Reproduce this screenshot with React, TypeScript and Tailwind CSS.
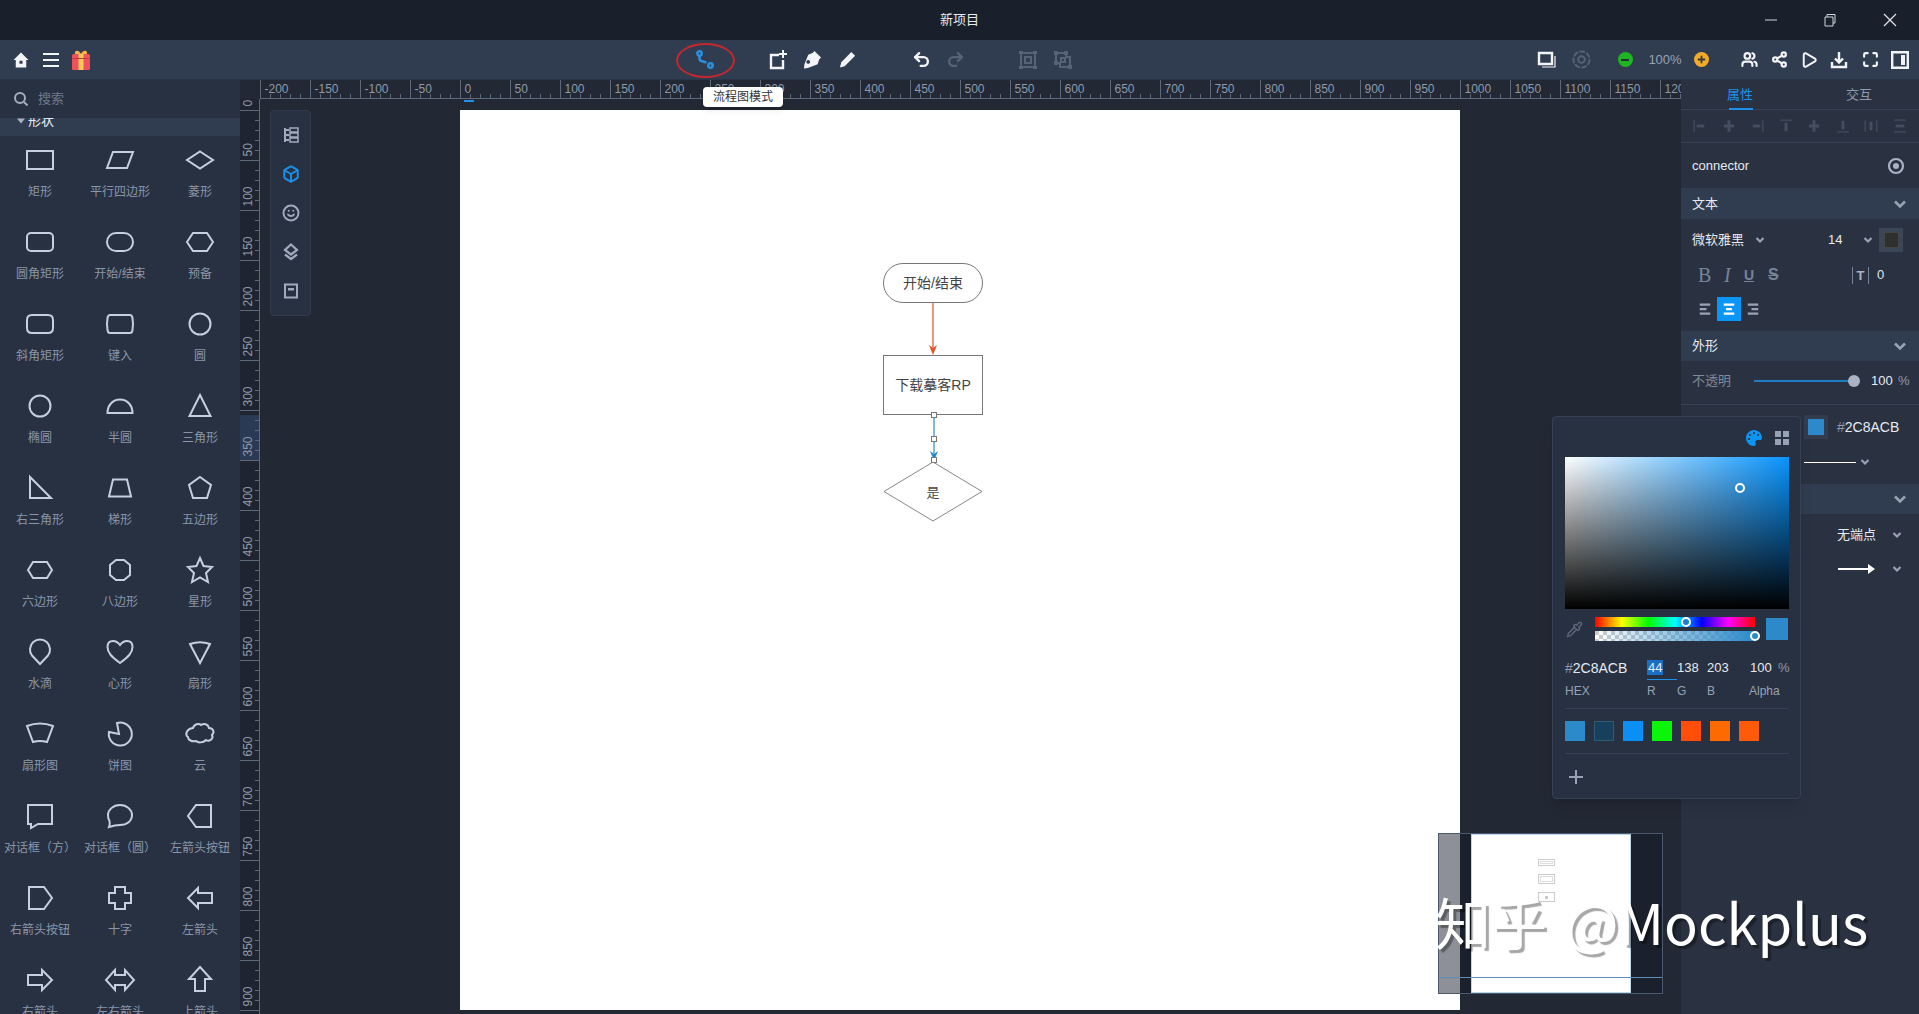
import type { ReactNode } from "react";
import { Box, Maximize, Pipette, Play, Redo2, Share2, Smile, Undo2, Users } from "lucide-react";
import { FaPalette } from "react-icons/fa";

const shapes: { label: string; d: string }[] = [
  { label: "矩形", d: "M3 7h26v18H3z" },
  { label: "平行四边形", d: "M9 8h20l-6 16H3z" },
  { label: "菱形", d: "M16 7.500 29 16 16 24.500 3 16z" },
  { label: "圆角矩形", d: "M7 7h18a4 4 0 0 1 4 4v10a4 4 0 0 1-4 4H7a4 4 0 0 1-4-4V11a4 4 0 0 1 4-4z" },
  { label: "开始/结束", d: "M12 7h8a9 9 0 0 1 0 18h-8a9 9 0 0 1 0-18z" },
  { label: "预备", d: "M9 7h14l6 9-6 9H9l-6-9z" },
  { label: "斜角矩形", d: "M8 7h16q5 0 5 5v8q0 5-5 5H8q-5 0-5-5v-8q0-5 5-5z" },
  { label: "键入", d: "M6 7h20q2 0 2.500 3 1 6 0 12-.5 3-2.500 3H6q-2 0-2.500-3-1-6 0-12Q4 7 6 7z" },
  { label: "圆", d: "M16 5.500a10.500 10.500 0 1 1 0 21 10.500 10.500 0 0 1 0-21z" },
  { label: "椭圆", d: "M16 5.500a10.500 10.500 0 1 1 0 21 10.500 10.500 0 0 1 0-21z" },
  { label: "半圆", d: "M3.500 23H28.500C28.500 15 23 9.500 16 9.500S3.500 15 3.500 23z" },
  { label: "三角形", d: "M16 5 26.500 26h-21z" },
  { label: "右三角形", d: "M6 5v21h21z" },
  { label: "梯形", d: "M9 7.500h14l4 17H5z" },
  { label: "五边形", d: "M16 5l11 8-4 13H9L5 13z" },
  { label: "六边形", d: "M9 8h14l5 8-5 8H9l-5-8z" },
  { label: "八边形", d: "M12 6h8l6 5v10l-6 5h-8l-6-5V11z" },
  { label: "星形", d: "M16 4l3.500 8 8.500 1-6 6 2 9-8-4.500L8 28l2-9-6-6 8.500-1z" },
  { label: "水滴", d: "M16 28 8 19.500a10 10 0 1 1 16 0z" },
  { label: "心形", d: "M16 27C8 21 3.500 17 3.500 11 3.500 7 6 5 9 5c3 0 5.500 2 7 4 1.500-2 4-4 7-4 3 0 5.500 2 5.500 6 0 6-4.500 10-12.500 16z" },
  { label: "扇形", d: "M6 8q10-3.500 20 0L16 27z" },
  { label: "扇形图", d: "M3 8q13-5 26 0l-6 16q-7-2-14 0z" },
  { label: "饼图", d: "M13 5a11.500 11.500 0 1 1-8 9l10 2z" },
  { label: "云", d: "M9 10c1-4 6-5 8-3 3-2 7-1 8 3 4 0 6 4 3 7 2 4-3 7-6 5-3 3-8 3-10 1-4 1-8-1-8-4-3-2-2-8 5-9z" },
  { label: "对话框（方）", d: "M4 5h24v19H14l-7 4v-4H4z" },
  { label: "对话框（圆）", d: "M16 5c7 0 12 5 12 10 0 6-5 10-12 10-3 0-5 0-11 2 1-3 1-4 .5-6C4 19 4 17 4 15 4 10 9 5 16 5z" },
  { label: "左箭头按钮", d: "M12 5h15v22H12L4 16z" },
  { label: "右箭头按钮", d: "M5 5h15l8 11-8 11H5z" },
  { label: "十字", d: "M11 5h10v6h6v10h-6v6H11v-6H5V11h6z" },
  { label: "左箭头", d: "M14 6 4 16l10 10v-5h14V11H14z" },
  { label: "右箭头", d: "M18 6l10 10-10 10v-5H4V11h14z" },
  { label: "左右箭头", d: "M11 6 2 16l9 10v-5h10v5l9-10-9-10v5H11z" },
  { label: "上箭头", d: "M16 3l11 12h-6v12H11V15H5z" },
];

// thin guide line, then the thick block of each align button
const alignPaths = [
  ["M5 5v14", "M8 12h9"],
  ["", "M12 5v14 M6 12h12"],
  ["M19 5v14", "M7 12h9"],
  ["M5 5h14", "M12 8v10"],
  ["", "M12 5v14 M6 12h12"],
  ["M5 19h14", "M12 6v10"],
  ["M5 5v14 M19 5v14", "M12 7v10"],
  ["M5 5h14 M5 19h14", "M7 12h10"],
];

const swatches = [
  "bg-[#2c8acb]",
  "bg-[#17405c] border border-[#2f5a78]",
  "bg-[#0a90f5]",
  "bg-[#0af50a]",
  "bg-[#ff4d0a]",
  "bg-[#ff6a00]",
  "bg-[#ff5a0a]",
];

function Slot({ className = "", children }: { className?: string; children: ReactNode }) {
  return <div className={`w-[30px] h-[30px] shrink-0 flex items-center justify-center ${className}`}>{children}</div>;
}

function Chevron({ big = false }: { big?: boolean }) {
  return big ? (
    <svg width="16" height="16" viewBox="0 0 16 16" fill="none" stroke="#97a3b5" strokeWidth="2.600">
      <path d="M3 5.500 8 10.500l5-5" />
    </svg>
  ) : (
    <svg width="10" height="10" viewBox="0 0 10 10" fill="none" stroke="#97a3b5" strokeWidth="2.200">
      <path d="M1.500 3 5 6.500 8.500 3" />
    </svg>
  );
}

function SectionHeader({ title, className }: { title?: string; className: string }) {
  return (
    <div className={`${className} shrink-0 bg-[#303c50] flex items-center justify-between pl-[11px] pr-[11px] text-[13px] text-[#e6eaf0]`}>
      <span>{title}</span>
      <Chevron big />
    </div>
  );
}

function AlignLines({ mode, color }: { mode: "l" | "c" | "r"; color: string }) {
  const d = { l: "M5 6h14 M5 12h9 M5 18h14", c: "M5 6h14 M8 12h8 M5 18h14", r: "M5 6h14 M10 12h9 M5 18h14" }[mode];
  return (
    <svg width="18" height="18" viewBox="0 0 24 24" fill="none" stroke={color} strokeWidth="3">
      <path d={d} />
    </svg>
  );
}

function TopBar() {
  return (
    <div className="h-[40px] shrink-0 bg-[#1a202b] relative flex items-center justify-center">
      <span className="text-[13px] text-[#e8ebf0]">新项目</span>
      <div className="absolute right-0 top-0 h-[40px] flex items-center">
        <svg className="mr-[45px]" width="14" height="14" viewBox="0 0 14 14" stroke="#cfd5de" strokeWidth="1"><path d="M1 7h12" /></svg>
        <svg className="mr-[46px]" width="14" height="14" viewBox="0 0 14 14" fill="none" stroke="#cfd5de" strokeWidth="1"><path d="M2 4h8v9H2z M4 4V1.500h8V10h-2" /></svg>
        <svg className="mr-[22px]" width="14" height="14" viewBox="0 0 14 14" stroke="#e2e6ec" strokeWidth="1.200"><path d="M1 1l12 12M13 1 1 13" /></svg>
      </div>
    </div>
  );
}

function Toolbar() {
  return (
    <div className="h-[40px] shrink-0 bg-[#303d50] flex items-center pl-[6px] border-b border-[#2a3547]">
      <Slot>
        <svg width="18" height="18" viewBox="0 0 24 24" fill="#f2f4f7" fillRule="evenodd"><path d="M12 2 2 12h3v10h14V12h3zM10 13h4v4h-4z" /></svg>
      </Slot>
      <Slot>
        <svg width="18" height="18" viewBox="0 0 18 18" stroke="#f2f4f7" strokeWidth="2.200"><path d="M1 3h16M1 9h16M1 15h16" /></svg>
      </Slot>
      <Slot>
        <svg width="20" height="22" viewBox="0 0 20 22">
          <path d="M5 2c2-1 4 1 5 3 1-2 3-4 5-3 2 1 1 4-1 4H6C4 6 3 3 5 2z" fill="#f9b24c" />
          <rect x="1" y="5" width="18" height="16" rx="1.500" fill="#f0505a" />
          <rect x="7.500" y="5" width="5" height="16" fill="#fdc95a" />
          <rect x="1" y="9" width="18" height="1" fill="#c23a48" />
        </svg>
      </Slot>

      <Slot className="ml-[594px] relative">
        <svg width="20" height="20" viewBox="0 0 20 20" fill="none" stroke="#2a90de" strokeWidth="2.500">
          <circle cx="4.500" cy="3.500" r="2.200" />
          <circle cx="15.500" cy="15.500" r="2.200" />
          <path d="M4.500 6v2.500q0 2 2 2.500l5 1.500" />
        </svg>
        <div className="absolute left-[-14px] top-[-2px] w-[59px] h-[35px] rounded-[50%] border-2 border-[#c4282f]" />
      </Slot>

      <Slot className="ml-[43px]">
        <svg width="20" height="20" viewBox="0 0 20 20" fill="none" stroke="#f2f4f7" strokeWidth="2.400">
          <path d="M11 5H3v13h12v-8" />
          <path d="M15 0v8M11 4h8" strokeWidth="2" />
        </svg>
      </Slot>
      <Slot className="ml-[4px]">
        <svg width="19" height="19" viewBox="0 0 20 20" fill="#f2f4f7" fillRule="evenodd">
          <path d="M12 1l7 7-2 2-1.500 5L5 19l-4 .500L1.500 15l4-10 5-2zM7.500 12.500a2 2 0 1 0 0 .1z" />
        </svg>
      </Slot>
      <Slot className="ml-[5px]">
        <svg width="19" height="19" viewBox="0 0 20 20" fill="#f2f4f7">
          <path d="M14 2l4 4L7 17l-5 1.500L3.500 13z" />
        </svg>
      </Slot>

      <Slot className="ml-[44px]"><Undo2 size={19} strokeWidth={3} color="#f2f4f7" /></Slot>
      <Slot className="ml-[4px]"><Redo2 size={19} strokeWidth={3} color="#566275" /></Slot>

      <Slot className="ml-[43px]">
        <svg width="20" height="20" viewBox="0 0 20 20" fill="none" stroke="#566275" strokeWidth="2">
          <path d="M3 3h14v14H3z" />
          <path d="M7 7h6v6H7z" />
          <path d="M1 1h4v3H1zM15 1h4v3h-4zM1 16h4v3H1zM15 16h4v3h-4z" fill="#566275" stroke="none" />
        </svg>
      </Slot>
      <Slot className="ml-[5px]">
        <svg width="20" height="20" viewBox="0 0 20 20" fill="none" stroke="#566275" strokeWidth="2">
          <path d="M3 3h10v4h4v10H7v-4H3z" />
          <path d="M8 8h4v4H8z" />
          <path d="M1 1h4v4H1zM11 1h4v4h-4zM15 15h4v4h-4zM1 11h4v4H1z" fill="#566275" stroke="none" />
        </svg>
      </Slot>

      <Slot className="ml-[454px]">
        <svg width="20" height="20" viewBox="0 0 20 20" fill="none" stroke="#f2f4f7">
          <path d="M2 3h13v11H2z" strokeWidth="2.400" />
          <path d="M18 6v11H5" strokeWidth="1.200" />
        </svg>
      </Slot>
      <Slot className="ml-[4px]">
        <svg width="19" height="19" viewBox="0 0 20 20" fill="none" stroke="#566275">
          <circle cx="10" cy="10" r="8.500" strokeWidth="2" strokeDasharray="6 1.500" />
          <circle cx="10" cy="10" r="3.500" strokeWidth="2" />
        </svg>
      </Slot>

      <Slot className="ml-[14px]">
        <div className="w-[15px] h-[15px] rounded-full bg-[#1fb522] flex items-center justify-center">
          <div className="w-[8px] h-[2px] bg-[#20303a]" />
        </div>
      </Slot>
      <div className="ml-[5px] w-[40px] text-center text-[13px] text-[#98a3b4]">100%</div>
      <Slot className="ml-[1px]">
        <svg width="15" height="15" viewBox="0 0 15 15">
          <circle cx="7.500" cy="7.500" r="7.500" fill="#efab29" />
          <path d="M3.800 7.500h7.400M7.500 3.800v7.400" stroke="#3a3a30" strokeWidth="1.800" />
        </svg>
      </Slot>

      <Slot className="ml-[18px]"><Users size={17} strokeWidth={3} color="#f2f4f7" /></Slot>
      <Slot><Share2 size={17} strokeWidth={3} color="#f2f4f7" /></Slot>
      <Slot><Play size={18} strokeWidth={2.600} color="#f2f4f7" /></Slot>
      <Slot>
        <svg width="18" height="18" viewBox="0 0 18 18" fill="none" stroke="#f2f4f7" strokeWidth="2.400">
          <path d="M9 1v10M5 7.500 9 11.500l4-4" />
          <path d="M2 11v5h14v-5" />
        </svg>
      </Slot>
      <Slot className="ml-[1px]"><Maximize size={17} strokeWidth={3} color="#f2f4f7" /></Slot>
      <Slot>
        <svg width="18" height="18" viewBox="0 0 18 18" fill="none">
          <path d="M1.200 1.200h15.600v15.600H1.200z" stroke="#f2f4f7" strokeWidth="2.400" />
          <path d="M10 4h4v10h-4z" fill="#f2f4f7" />
        </svg>
      </Slot>
    </div>
  );
}

function ShapePanel() {
  return (
    <div className="w-[240px] shrink-0 bg-[#283142] flex flex-col overflow-hidden">
      <div className="h-[38px] shrink-0 flex items-center pl-[13px] text-[13px] text-[#6e7a8c] z-10 bg-[#283142]">
        <svg width="16" height="16" viewBox="0 0 16 16" fill="none" stroke="#a3aebd" strokeWidth="2">
          <circle cx="7" cy="7" r="5" />
          <path d="M11 11l3.500 3.500" />
        </svg>
        <span className="ml-[9px]">搜索</span>
      </div>
      <div className="h-[30px] -mt-[12px] shrink-0 bg-[#303c50] flex items-center pl-[17px] text-[13px] text-[#e6eaf0]">
        <svg className="mr-[3px]" width="8" height="8" viewBox="0 0 8 8" fill="#a7b2c2"><path d="M0 1.500h8L4 6.500z" /></svg>
        形状
      </div>
      <div className="grid grid-cols-[80px_80px_80px] overflow-hidden">
        {shapes.map((shape) => (
          <div key={shape.label} className="h-[82px] pt-[8px] flex flex-col items-center">
            <svg width="32" height="32" viewBox="0 0 32 32" fill="none" stroke="#c5cfdd" strokeWidth="2">
              <path d={shape.d} />
            </svg>
            <span className="mt-[8px] h-[16px] leading-[16px] whitespace-nowrap text-[12px] text-[#8a96a8]">{shape.label}</span>
          </div>
        ))}
      </div>
    </div>
  );
}

function HorizontalRuler() {
  const ticks = [];
  for (let v = -200; v <= 1230; v += 10) ticks.push(v);
  return (
    <svg className="block shrink-0" width="1441" height="19" viewBox="0 0 1441 19">
      <rect width="1441" height="19" fill="#222834" />
      <path d="M20 18.500H1441" stroke="#5d6879" />
      {ticks.map((v) => {
        const x = v + 220 + 0.5;
        const major = v % 50 === 0;
        return (
          <g key={v}>
            <path d={major ? `M${x} 0V19` : `M${x} 14V19`} stroke="#5d6879" />
            {major && (
              <text x={x + 4} y="13" fontSize="12" fill="#8e99a9">{v}</text>
            )}
          </g>
        );
      })}
    </svg>
  );
}

function VerticalRuler() {
  const ticks = [];
  for (let v = 0; v <= 900; v += 10) ticks.push(v);
  return (
    <svg className="block shrink-0" width="20" height="915" viewBox="0 0 20 915">
      <rect width="20" height="915" fill="#1f2530" />
      <rect y="316" width="20" height="45" fill="#2a3a55" />
      <path d="M19.500 0V915" stroke="#5d6879" />
      {ticks.map((v) => {
        const y = v + 11 + 0.5;
        const major = v % 50 === 0;
        return (
          <g key={v}>
            <path d={major ? `M0 ${y}H20` : `M15 ${y}H20`} stroke="#5d6879" />
            {major && (
              <text transform={`translate(12 ${y - 4}) rotate(-90)`} fontSize="12" fill="#8e99a9">{v}</text>
            )}
          </g>
        );
      })}
    </svg>
  );
}

function FlowChart() {
  return (
    <svg className="block" width="1000" height="900" viewBox="0 0 1000 900" fontSize="14" fill="#444">
      <rect x="423.500" y="153.500" width="99" height="39" rx="19.500" fill="none" stroke="#777" />
      <text x="473" y="178" textAnchor="middle">开始/结束</text>
      <path d="M473 193V240" stroke="#e8502a" strokeWidth="1.200" />
      <path d="M469 235 473 238 477 235 473 245z" fill="#e8502a" />
      <rect x="423.500" y="245.500" width="99" height="59" fill="none" stroke="#777" />
      <text x="473" y="280" textAnchor="middle">下载摹客RP</text>
      <path d="M474 305V345" stroke="#2c8acb" strokeWidth="1.200" />
      <path d="M470 341 474 344 478 341 474 351z" fill="#2c8acb" />
      <path d="M473 352 522 381.500 473 411 424 381.500z" fill="none" stroke="#888" />
      <text x="473" y="387" textAnchor="middle" fontSize="13">是</text>
      <rect x="471.500" y="302.500" width="5" height="5" fill="#fff" stroke="#777" />
      <rect x="471.500" y="326.500" width="5" height="5" fill="#fff" stroke="#777" />
      <rect x="471.500" y="347.500" width="5" height="5" fill="#fff" stroke="#777" />
    </svg>
  );
}

function SideTools() {
  return (
    <div className="absolute left-[30px] top-[30px] w-[41px] h-[206px] rounded bg-[#283142] border border-[#2f3a4b] flex flex-col items-center pt-[9px] gap-[9px]">
      <svg className="w-[30px] h-[30px] p-[7px]" viewBox="0 0 16 16" fill="none" stroke="#a0abbd" strokeWidth="2">
        <path d="M2 1v14M2 3h4M2 8h4M2 13h4" />
        <path d="M7 1h8v4H7zM7 6h8v4H7zM7 11h8v4H7z" strokeWidth="1.500" />
      </svg>
      <Slot><Box size={18} strokeWidth={2.600} color="#1c90e8" /></Slot>
      <Slot><Smile size={18} strokeWidth={2.600} color="#a0abbd" /></Slot>
      <Slot>
        <svg width="18" height="18" viewBox="0 0 18 18" fill="none" stroke="#a0abbd" strokeWidth="2.200">
          <path d="M9 1.500 15 7 9 11.500 3 7z" />
          <path d="M3 11.500 9 16l6-4.500" />
        </svg>
      </Slot>
      <Slot>
        <svg width="16" height="16" viewBox="0 0 16 16" fill="none" stroke="#a0abbd" strokeWidth="2">
          <path d="M2 1.500h12v13H2z" />
          <path d="M5 5h6v2.500H5z" fill="#a0abbd" stroke="none" />
        </svg>
      </Slot>
    </div>
  );
}

function RightPanel() {
  return (
    <div className="w-[238px] shrink-0 bg-[#2a3242] flex flex-col text-[13px] text-[#e6eaf0] overflow-hidden">
      <div className="h-[30px] shrink-0 flex border-b border-[#364154] text-[13px]">
        <div className="relative w-[118px] flex items-center justify-center text-[#1e90e8]">
          属性
          <div className="absolute left-[48px] bottom-[-1px] w-[24px] h-[2px] bg-[#1e90e8]" />
        </div>
        <div className="w-[120px] flex items-center justify-center text-[#8e99ab]">交互</div>
      </div>
      <div className="h-[33px] shrink-0 flex items-center pl-[9px] border-b border-[#364154]">
        {alignPaths.map(([thin, thick], i) => (
          <svg key={i} className="mr-[8.500px]" width="20" height="20" viewBox="0 0 24 24" fill="none" stroke="#434e60">
            <path d={thin} strokeWidth="1.500" />
            <path d={thick} strokeWidth="3.500" />
          </svg>
        ))}
      </div>
      <div className="h-[45px] shrink-0 flex items-center justify-between pl-[11px] pr-[14px]">
        <span>connector</span>
        <svg width="18" height="18" viewBox="0 0 18 18" fill="none" stroke="#a9b3c3">
          <circle cx="9" cy="9" r="7" strokeWidth="2.200" />
          <circle cx="9" cy="9" r="3" fill="#a9b3c3" stroke="none" />
        </svg>
      </div>
      <SectionHeader title="文本" className="h-[31px]" />
      <div className="h-[42px] shrink-0 flex items-center pl-[11px]">
        <span className="w-[52px]">微软雅黑</span>
        <span className="ml-[11px]"><Chevron /></span>
        <span className="ml-[63px] w-[22px]">14</span>
        <span className="ml-[13px]"><Chevron /></span>
        <div className="ml-[6px] w-[24px] h-[24px] bg-[#3a4556] flex items-center justify-center">
          <div className="w-[15px] h-[16px] bg-[#2f2f2f] border border-[#454545]" />
        </div>
      </div>
      <div className="h-[28px] shrink-0 flex items-center text-[#76849a]">
        <span className="ml-[17px] w-[13px] text-[20px] font-['Liberation_Serif',serif]">B</span>
        <span className="ml-[13px] w-[7px] text-[20px] italic font-['Liberation_Serif',serif]">I</span>
        <span className="ml-[13px] w-[11px] text-[14px] font-bold underline">U</span>
        <span className="ml-[13px] w-[12px] text-[16px] font-bold line-through">S</span>
        <span className="ml-[72px] border-x border-[#76849a] h-[17px] w-[17px] text-[13px] leading-[17px] font-bold text-center text-[#a9b3c3]">T</span>
        <span className="ml-[8px] text-[13px] text-[#dfe4ea]">0</span>
      </div>
      <div className="h-[42px] shrink-0 flex items-start pt-[8px] pl-[12px]">
        <div className="w-[24px] h-[24px] flex items-center justify-center"><AlignLines mode="l" color="#97a3b5" /></div>
        <div className="w-[24px] h-[24px] bg-[#0a96f7] flex items-center justify-center"><AlignLines mode="c" color="#fff" /></div>
        <div className="w-[24px] h-[24px] flex items-center justify-center"><AlignLines mode="r" color="#97a3b5" /></div>
      </div>
      <SectionHeader title="外形" className="h-[30px]" />
      <div className="h-[44px] shrink-0 flex items-center pl-[11px] border-b border-[#364154]">
        <span className="w-[62px] text-[#7f8a9b] -mt-[4px]">不透明</span>
        <div className="relative w-[100px] h-[2px] bg-[#1e7cc4] -mt-[4px]">
          <div className="absolute right-[-6px] top-[-5px] w-[12px] h-[12px] rounded-full bg-[#a8b3c4]" />
        </div>
        <span className="ml-[17px] w-[27px] text-[13px] -mt-[4px]">100</span>
        <span className="text-[13px] text-[#8e99ab] -mt-[4px]">%</span>
      </div>
      <div className="h-[44px] shrink-0 flex items-center pl-[123px]">
        <div className="w-[24px] h-[24px] bg-[#323c4e] flex items-center justify-center">
          <div className="w-[16px] h-[16px] bg-[#2c8acb]" />
        </div>
        <span className="ml-[9px] text-[14px]"><span className="text-[#8e99ab]">#</span>2C8ACB</span>
      </div>
      <div className="h-[26px] shrink-0 flex items-center pl-[123px]">
        <div className="w-[52px] h-[1px] bg-white" />
        <span className="ml-[4px]"><Chevron /></span>
      </div>
      <div className="h-[9px] shrink-0" />
      <SectionHeader className="h-[30px]" />
      <div className="h-[42px] shrink-0 flex items-center pl-[156px]">
        <span className="w-[40px]">无端点</span>
        <span className="ml-[15px]"><Chevron /></span>
      </div>
      <div className="h-[26px] shrink-0 flex items-center pl-[157px]">
        <svg width="37" height="10" viewBox="0 0 37 10" fill="#fff"><path d="M0 4h30V0l7 5-7 5V6H0z" /></svg>
        <span className="ml-[17px]"><Chevron /></span>
      </div>
    </div>
  );
}

function ColorPicker() {
  return (
    <div className="absolute left-[1552px] top-[416px] w-[249px] h-[383px] rounded bg-[#283142] border border-[#364154] shadow-lg text-[12px] text-[#e6eaf0] pl-[12px] pt-[1px] flex flex-col">
      <div className="h-[39px] shrink-0 flex items-center pl-[181px] gap-[13px] pt-[1px]">
        <FaPalette size={16} color="#0e94f2" />
        <div className="grid grid-cols-2 gap-[2px]">
          <div className="w-[6px] h-[6px] bg-[#97a3b5]" />
          <div className="w-[6px] h-[6px] bg-[#97a3b5]" />
          <div className="w-[6px] h-[6px] bg-[#97a3b5]" />
          <div className="w-[6px] h-[6px] bg-[#97a3b5]" />
        </div>
      </div>
      <div className="relative w-[224px] h-[152px] shrink-0 bg-[linear-gradient(to_top,#000,transparent),linear-gradient(to_right,#fff,#0894ff)]">
        <div className="absolute left-[170px] top-[26px] w-[10px] h-[10px] rounded-full border-2 border-white bg-[#2c8acb]" />
      </div>
      <div className="h-[24px] mt-[8px] shrink-0 flex">
        <div className="w-[30px] flex items-center pl-[1px]"><Pipette size={17} color="#5c6879" /></div>
        <div className="w-[165px] flex flex-col gap-[4px]">
          <div className="relative w-[160px] h-[10px] bg-[linear-gradient(to_right,#f00,#ff0,#0f0,#0ff,#00f,#f0f,#f00)]">
            <div className="absolute left-[86px] top-[0px] w-[10px] h-[10px] rounded-full border-2 border-white bg-[#1a7fd0]" />
          </div>
          <div className="relative w-[160px] h-[10px] bg-[linear-gradient(to_right,transparent,#2c8acb),repeating-conic-gradient(#fff_0_25%,#ccc_0_50%)] bg-size-[100%_100%,8px_8px]">
            <div className="absolute right-[-5px] top-[0px] w-[10px] h-[10px] rounded-full border-2 border-white bg-[#2c8acb]" />
          </div>
        </div>
        <div className="ml-[6px] w-[22px] h-[22px] mt-[1px] bg-[#2c8acb]" />
      </div>
      <div className="h-[24px] mt-[15px] shrink-0 flex items-center text-[13px]">
        <div className="w-[82px] text-[14px]"><span className="text-[#8e99ab]">#</span>2C8ACB</div>
        <div className="w-[30px] h-[24px] flex items-center border-b border-[#1e90e8]">
          <span className="bg-[#1b6fc2] px-[1px] leading-[15px]">44</span>
        </div>
        <div className="w-[30px]">138</div>
        <div className="w-[43px]">203</div>
        <div className="w-[28px]">100</div>
        <div className="text-[#8e99ab]">%</div>
      </div>
      <div className="h-[22px] shrink-0 flex items-center text-[#97a3b5]">
        <div className="w-[82px]">HEX</div>
        <div className="w-[30px]">R</div>
        <div className="w-[30px]">G</div>
        <div className="w-[42px]">B</div>
        <div>Alpha</div>
      </div>
      <div className="w-[224px] mt-[6px] border-t border-[#364154]" />
      <div className="mt-[12px] flex gap-[9px]">
        {swatches.map((c, i) => (
          <div key={i} className={`w-[20px] h-[20px] ${c}`} />
        ))}
      </div>
      <div className="w-[224px] mt-[12px] border-t border-[#364154]" />
      <div className="mt-[16px] pl-[4px]">
        <svg width="14" height="14" viewBox="0 0 14 14" stroke="#97a3b5" strokeWidth="2"><path d="M0 7h14M7 0v14" /></svg>
      </div>
    </div>
  );
}

function MiniMap() {
  return (
    <div className="absolute left-[1438px] top-[833px] w-[225px] h-[161px] border border-[#4d5a6e] bg-[#1a202c] flex">
      <div className="w-[21px] bg-[#8d9197]" />
      <div className="w-[11px]" />
      <div className="w-[160px] bg-white flex flex-col items-center pt-[24px] gap-[8px] border border-[#bcd6ee]">
        <div className="w-[17px] h-[7px] border border-[#ccc] -ml-[10px] p-[1px]"><div className="h-full border border-[#ddd]" /></div>
        <div className="w-[17px] h-[10px] border border-[#ccc] -ml-[10px] p-[1px]"><div className="h-full border border-[#ddd]" /></div>
        <div className="w-[17px] h-[10px] border border-[#ccc] -ml-[10px] flex items-center justify-center"><div className="w-[3px] h-[3px] bg-[#ccc]" /></div>
      </div>
      <div className="absolute left-0 right-0 top-[143px] h-[1px] bg-[#5f8db8]" />
    </div>
  );
}

export default function App() {
  return (
    <div className="relative w-[1919px] h-[1014px] overflow-hidden bg-[#222834] font-['Liberation_Sans','Noto_Sans_CJK_SC',sans-serif] flex flex-col">
      <TopBar />
      <Toolbar />
      <div className="flex flex-1 min-h-0">
        <ShapePanel />
        <div className="relative w-[1441px] shrink-0 flex flex-col overflow-hidden">
          <HorizontalRuler />
          <div className="flex flex-1 min-h-0">
            <VerticalRuler />
            <div className="relative flex-1 pl-[200px] pt-[11px]">
              <div className="w-[1000px] h-[900px] bg-white">
                <FlowChart />
              </div>
            </div>
          </div>
          <div className="absolute left-[224px] top-[20px] w-[10px] h-[2px] bg-[#1e90e8]" />
          <SideTools />
          <div className="absolute left-[463px] top-[7px] h-[20px] w-[80px] bg-white rounded-sm shadow-md text-[#333] text-[12px] leading-[20px] text-center">流程图模式</div>
        </div>
        <RightPanel />
      </div>
      <ColorPicker />
      <MiniMap />
      <div className="absolute left-[1435px] top-[881px] text-[56px] leading-[80px] whitespace-pre text-white font-['Noto_Sans_CJK_SC',sans-serif] [text-shadow:3px_3px_1px_rgba(0,0,0,0.35)]">
        知乎 <span className="ml-[6px]">@Mockplus</span>
      </div>
    </div>
  );
}
